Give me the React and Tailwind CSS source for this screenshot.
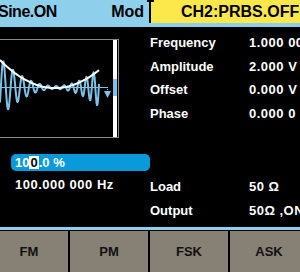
import React from 'react';

// sweep waveform inside the preview box (svg coords, box content is 113x97)
const envelope = (x) => 0.00926 * (x - 55) ** 2;

const wavePath = (() => {
  let d = '';
  for (let x = 0; x <= 99; x += 0.5) {
    const amp = envelope(x) + 1.5;
    const ph = 2 * Math.PI * (0.1 * x + 0.000226 * x * x - 0.085);
    const y = 47.5 - amp * Math.sin(ph);
    d += (x === 0 ? 'M' : 'L') + x.toFixed(1) + ' ' + y.toFixed(1);
  }
  return d;
})();

const curvePath = (() => {
  let d = '';
  for (let x = 0; x <= 99; x += 1) {
    d += (x === 0 ? 'M' : 'L') + x + ' ' + (48 - envelope(x)).toFixed(1);
  }
  return d;
})();

const params = [
  { label: 'Frequency', value: '1.000 000 kHz' },
  { label: 'Amplitude', value: '2.000 V' },
  { label: 'Offset', value: '0.000 V' },
  { label: 'Phase', value: '0.000 0' },
];

const WavePreview = () => (
  <div className="flex h-[99px] w-[119px] border-y border-r border-[#8a8a8a]">
    <svg width="113" height="97" viewBox="0 0 113 97" className="block">
      <line x1="0" y1="47.5" x2="108" y2="47.5" stroke="#7dc3e8" strokeWidth="1" />
      <path d={wavePath} fill="none" stroke="#7dc3e8" strokeWidth="2" strokeLinejoin="round" />
      <path d={curvePath} fill="none" stroke="#ffffff" strokeWidth="2" />
      <line x1="107.5" y1="47" x2="107.5" y2="51" stroke="#7dc3e8" strokeWidth="1" strokeDasharray="1 1" />
      <polygon points="104,51 111,51 107.5,58" fill="#7dc3e8" />
    </svg>
    <div className="w-[4px] bg-white">
      <div className="mt-[39px] h-[17px] bg-[#7dc3e8]" />
    </div>
    <div className="w-[1px]" />
  </div>
);

export default function App() {
  return (
    <div className="w-[300px] h-[272px] bg-black overflow-hidden font-['Liberation_Sans',Arial,sans-serif] font-bold">
      <div className="flex h-[23px]">
        <div className="w-[149px] bg-[#8ecfec] flex items-center justify-between pr-[5px] text-[16px] text-black">
          <span className="-ml-[2px] tracking-[-0.5px]">Sine.ON</span>
          <span>Mod</span>
        </div>
        <div className="relative flex-1 bg-[#fde84c] border-l-2 border-black flex items-center pl-[30px] text-[16px] text-black whitespace-nowrap">
          <span className="absolute -left-[4px] top-0 h-[2px] w-[7px] bg-black" />
          CH2:PRBS.OFF
        </div>
      </div>
      <div className="h-[4px] bg-[#8ecfec]" />

      <div className="flex h-[200px]">
        <div className="w-[150px] shrink-0 pt-[12px] flex flex-col">
          <WavePreview />
          <div className="mt-[16px] ml-[11px] w-[139px] h-[17px] rounded-[5px] bg-[#0a9ad9] flex pl-[4px] text-[13px] text-white leading-[17px]">
            <span>10</span>
            <span className="my-[2px] px-[1px] leading-[13px] bg-white text-black">0</span>
            <span>.0 %</span>
          </div>
          <div className="mt-[4px] pl-[15px] text-[13px] leading-[20px] tracking-[0.5px] text-white whitespace-nowrap">
            100.000 000 Hz
          </div>
        </div>

        <div className="flex-1 pt-[4px] text-[13px] text-white">
          {params.map((p) => (
            <div key={p.label} className="flex h-[23.5px] items-center">
              <span className="w-[99px] shrink-0">{p.label}</span>
              <span className="tracking-[0.5px] whitespace-nowrap">{p.value}</span>
            </div>
          ))}
          <div className="mt-[50px] flex h-[24px] items-center">
            <span className="w-[99px] shrink-0">Load</span>
            <span className="tracking-[0.5px] whitespace-nowrap">50 Ω</span>
          </div>
          <div className="flex h-[24px] items-center">
            <span className="w-[99px] shrink-0">Output</span>
            <span className="tracking-[0.5px] whitespace-nowrap">50Ω ,ON</span>
          </div>
        </div>
      </div>

      <div className="h-[3px] bg-[#8ecfec]" />
      <div className="h-[1px] bg-black" />
      <div className="-ml-[10px] w-[318px] h-[41px] flex gap-[2px] bg-black">
        {['FM', 'PM', 'FSK', 'ASK'].map((m) => (
          <div key={m} className="w-[78px] bg-[#878074] flex items-center justify-center text-[13px] text-[#111]">
            {m}
          </div>
        ))}
      </div>
    </div>
  );
}
